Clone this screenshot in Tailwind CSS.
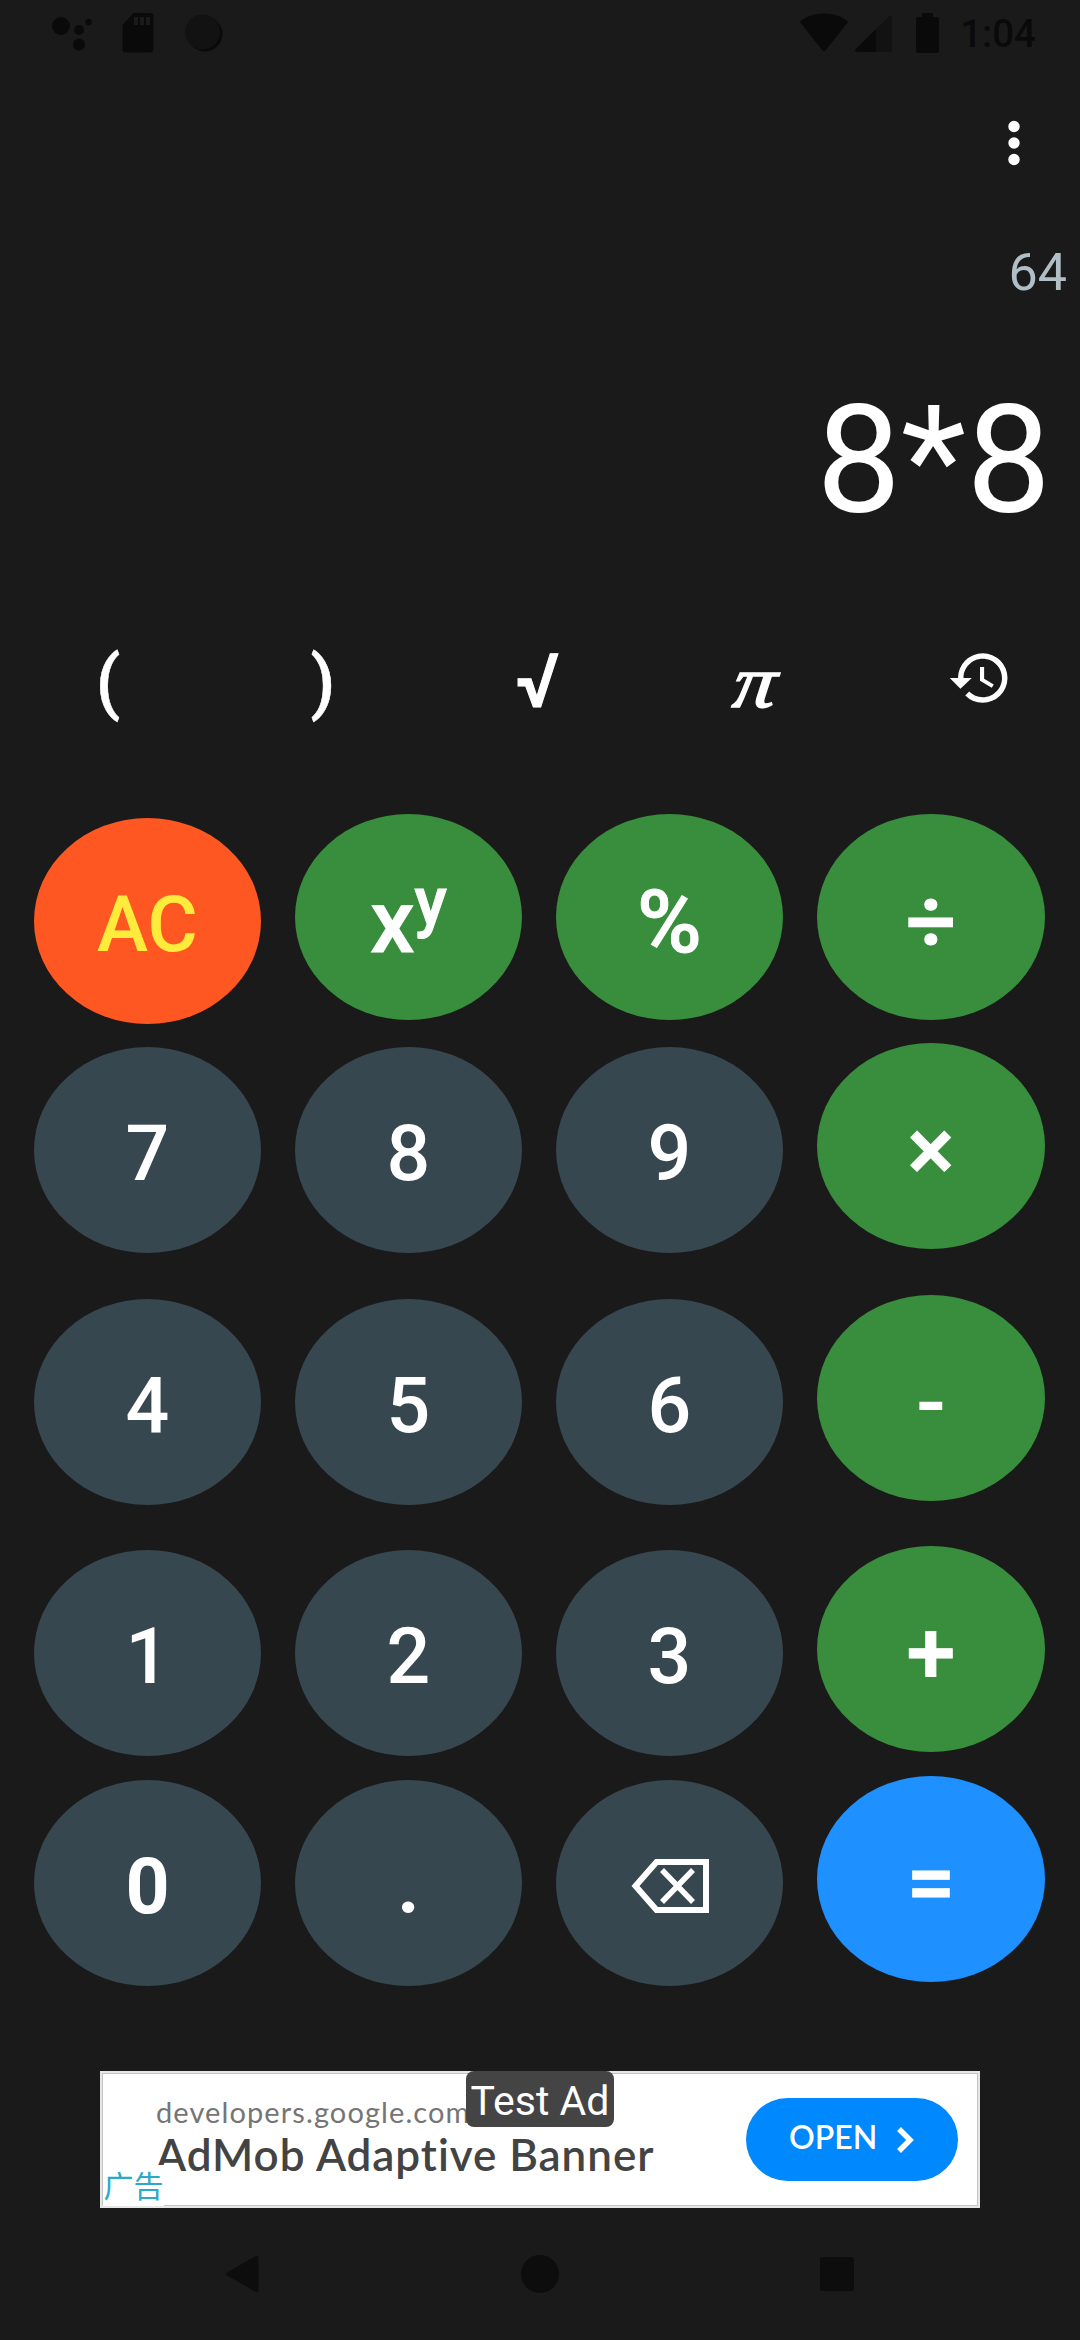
<!DOCTYPE html>
<html lang="en">
<head>
    <meta charset="UTF-8">
    <meta name="viewport" content="width=device-width, initial-scale=1.0">
    <title>Calculator</title>
    <script src="https://cdn.jsdelivr.net/npm/@tailwindcss/browser@4"></script>
</head>

<body class="bg-[#1a1a1a] text-white font-['Roboto',sans-serif]">
    <div class="w-[1080px] h-[2340px] flex flex-col overflow-hidden">
        <!-- Status bar -->
        <header class="h-[66px] shrink-0 flex items-center justify-between pl-[52px] pr-[44px] text-[#0a0a0a]">
            <div class="flex items-center gap-[30px]">
                <svg class="w-[40px] h-[40px]" viewBox="0 0 40 40" fill="currentColor">
                    <circle cx="9" cy="13" r="9"/><circle cx="27" cy="17" r="5"/>
                    <circle cx="36.500" cy="9" r="3.200"/><circle cx="27" cy="31.500" r="6"/>
                </svg>
                <svg class="w-[32px] h-[40px]" viewBox="0 0 32 40">
                    <path fill="currentColor" d="M11.500 0H28a3.500 3.500 0 0 1 3.500 3.500V36a3.500 3.500 0 0 1-3.500 3.500H4A3.500 3.500 0 0 1 .5 36V12z"/>
                    <path fill="#1a1a1a" d="M12 4h4v8h-4zM18 4h4v8h-4zM24 4h4v8h-4z"/>
                </svg>
                <svg class="w-[40px] h-[40px]" viewBox="0 0 40 40">
                    <circle cx="21" cy="21" r="17.500" fill="#0a0a0a"/>
                    <circle cx="18.500" cy="19" r="17.500" fill="#121212"/>
                </svg>
            </div>
            <div class="flex items-center">
                <svg class="w-[48px] h-[40px]" viewBox="0 0 48 40" fill="currentColor">
                    <path d="M1 7.500C14-2 34-2 47 7.500q1.300 1.200.3 2.600L25.500 37.500q-1.500 1.500-3 0L.7 10.100Q-.3 8.700 1 7.500z"/>
                </svg>
                <svg class="ml-[7px] w-[37px] h-[40px]" viewBox="0 0 37 40">
                    <path fill="#121212" d="M34.500 2.800Q37 1 37 4v33q0 2-2 2H2q-3-.5-1.300-2.700z"/>
                    <path fill="currentColor" d="M21 16v23H2q-3-.5-1.300-2.700z"/>
                </svg>
                <svg class="ml-[24px] w-[23px] h-[40px]" viewBox="0 0 23 40" fill="currentColor">
                    <path d="M6 0h11v4h4q2 0 2 2v32q0 2-2 2H2q-2 0-2-2V6q0-2 2-2h4z"/>
                </svg>
                <span class="ml-[21px] mt-[3px] text-[38.500px] leading-none font-medium">1:04</span>
            </div>
        </header>

        <!-- Overflow menu -->
        <div class="h-[154px] shrink-0 flex justify-end items-center pr-[60px]">
            <svg class="w-[12px] h-[48px]" viewBox="0 0 12 48" fill="currentColor">
                <circle cx="6" cy="7.500" r="5.700"/><circle cx="6" cy="24" r="5.700"/><circle cx="6" cy="40.500" r="5.700"/>
            </svg>
        </div>

        <!-- Result and expression -->
        <div class="h-[100px] shrink-0 flex items-center justify-end pt-[6px] pr-[13px] text-[52px] text-[#b0bec5]">64</div>
        <div class="h-[280px] shrink-0 flex items-center justify-end pt-[2px] pr-[29px] text-[151px]">8*8</div>

        <!-- Function row -->
        <div class="h-[170px] shrink-0 grid grid-cols-5 items-center text-center text-[71px] font-medium leading-none">
            <button class="pb-[7px] [-webkit-text-stroke:0.500px_white]">(</button>
            <button class="pb-[7px] pr-[2px] [-webkit-text-stroke:0.500px_white]">)</button>
            <button class="pb-[8px] pr-[5px] text-[75px] [-webkit-text-stroke:1px_white]">√</button>
            <button class="pb-[6px] font-['Liberation_Serif',serif] italic font-normal text-[74px] [-webkit-text-stroke:1.500px_white]"><span class="inline-block scale-x-115 -skew-x-6">π</span></button>
            <button class="pl-[16px] pb-[14px] flex justify-center">
                <svg class="w-[66px] h-[66px]" viewBox="0 0 24 24" fill="currentColor">
                    <path d="M13 3a9 9 0 0 0-9 9H1l3.890 3.890L9 12H6c0-3.870 3.130-7 7-7s7 3.130 7 7-3.130 7-7 7c-1.930 0-3.680-.79-4.940-2.060l-1.420 1.420A8.950 8.950 0 0 0 13 21a9 9 0 0 0 0-18zm-1 5v5l4.280 2.540.72-1.210-3.500-2.080V8z"/>
                </svg>
            </button>
        </div>

        <!-- Keypad -->
        <main class="mt-[44px] h-[1187px] shrink-0 px-[34px] grid grid-cols-[227px_227px_227px_228px] grid-rows-[229px_252px_251px_230px_206px] gap-x-[34px] text-[77px] leading-none font-medium">
            <button class="mt-[4px] h-[206px] pt-[8px] rounded-[50%] bg-[#ff5722] text-[#ffeb3b]">AC</button>
            <button class="h-[206px] pt-[10px] rounded-[50%] bg-[#388e3c] text-[88px] [-webkit-text-stroke:1px_white]">x<span class="relative -top-[28px] text-[66px]">y</span></button>
            <button class="h-[206px] pt-[9px] rounded-[50%] bg-[#388e3c] text-[88px] [-webkit-text-stroke:1px_white]">%</button>
            <button class="h-[206px] pt-[7px] rounded-[50%] bg-[#388e3c] text-[88px] [-webkit-text-stroke:1px_white]">÷</button>

            <button class="mt-[4px] h-[206px] pt-[8px] rounded-[50%] bg-[#37474f]">7</button>
            <button class="mt-[4px] h-[206px] pt-[8px] rounded-[50%] bg-[#37474f]">8</button>
            <button class="mt-[4px] h-[206px] pt-[8px] rounded-[50%] bg-[#37474f]">9</button>
            <button class="h-[206px] pt-[7px] rounded-[50%] bg-[#388e3c] text-[88px] [-webkit-text-stroke:1px_white]">×</button>

            <button class="mt-[4px] h-[206px] pt-[8px] rounded-[50%] bg-[#37474f]">4</button>
            <button class="mt-[4px] h-[206px] pt-[8px] rounded-[50%] bg-[#37474f]">5</button>
            <button class="mt-[4px] h-[206px] pt-[8px] rounded-[50%] bg-[#37474f]">6</button>
            <button class="h-[206px] pt-[8px] rounded-[50%] bg-[#388e3c] text-[88px]">-</button>

            <button class="mt-[4px] h-[206px] pt-[8px] rounded-[50%] bg-[#37474f]">1</button>
            <button class="mt-[4px] h-[206px] pt-[8px] rounded-[50%] bg-[#37474f]">2</button>
            <button class="mt-[4px] h-[206px] pt-[8px] rounded-[50%] bg-[#37474f]">3</button>
            <button class="h-[206px] pt-[8px] rounded-[50%] bg-[#388e3c] text-[88px] [-webkit-text-stroke:1px_white]">+</button>

            <button class="mt-[4px] h-[206px] pt-[8px] rounded-[50%] bg-[#37474f] font-bold">0</button>
            <button class="mt-[4px] h-[206px] pt-[8px] rounded-[50%] bg-[#37474f] font-bold">.</button>
            <button class="mt-[4px] h-[206px] pt-[5px] rounded-[50%] bg-[#37474f] flex items-center justify-center">
                <svg class="w-[78px] h-[54px]" viewBox="0 0 78 54" fill="none" stroke="currentColor" stroke-width="6">
                    <path d="M4.500 27 25.500 3H75v48H25.500z"/>
                    <path d="m31 11 31 32M62 11 31 43" stroke-width="5.500"/>
                </svg>
            </button>
            <button class="h-[206px] pt-[8px] rounded-[50%] bg-[#1e90ff] text-[86px] [-webkit-text-stroke:1px_white]">=</button>
        </main>

        <!-- Ad banner -->
        <div class="mt-[70px] mx-[100px] h-[137px] shrink-0 relative bg-white border-2 border-[#e6e6e6] flex font-['Lato',sans-serif]">
            <div class="w-full border border-[#c4c4c4] flex items-center justify-between pl-[53px] pr-[19px]">
                <div class="flex flex-col whitespace-nowrap pb-[5px]">
                    <span class="text-[29px] leading-[34px] tracking-[1.100px] text-[#757575]">developers.google.com</span>
                    <span class="text-[44px] leading-[50px] tracking-[0.950px] font-semibold text-[#434343]">AdMob Adaptive Banner</span>
                </div>
                <div class="w-[212px] h-[83px] rounded-full bg-[#0088ff] flex items-center pl-[43px] pb-[5px] gap-[19px]">
                    <span class="text-[32px] leading-none font-semibold">OPEN</span>
                    <svg class="w-[18px] h-[28px] mt-[5px]" viewBox="0 0 18 28" fill="none" stroke="currentColor" stroke-width="5.500"><path d="m3 3 11 11L3 25"/></svg>
                </div>
            </div>
            <div class="absolute left-[364px] -top-[2px] w-[148px] h-[56px] rounded-[8px] bg-[#444] text-center text-[41px] leading-[60px] font-['Roboto',sans-serif]">Test Ad</div>
            <div class="absolute left-px top-[92px] w-[61px] h-[41px] bg-white text-center text-[30px] leading-[38px] text-[#2aa9c9] font-['Noto_Sans_CJK_SC',sans-serif]">广告</div>
        </div>

        <!-- Navigation bar -->
        <nav class="mt-[46px] h-[40px] shrink-0 flex items-center justify-between pl-[226px] pr-[226px] text-[#0d0d0d]">
            <svg class="w-[33px] h-[38px]" viewBox="0 0 33 38" fill="currentColor"><path d="M29 1.600q3.500-1.600 3.500 1.400v32q0 3-3.500 1.400L1 20.500q-1.500-1.500 0-3z"/></svg>
            <div class="w-[38px] h-[38px] rounded-full bg-[#0d0d0d]"></div>
            <div class="w-[34px] h-[34px] rounded-[2px] bg-[#0d0d0d]"></div>
        </nav>
    </div>
</body>
</html>
